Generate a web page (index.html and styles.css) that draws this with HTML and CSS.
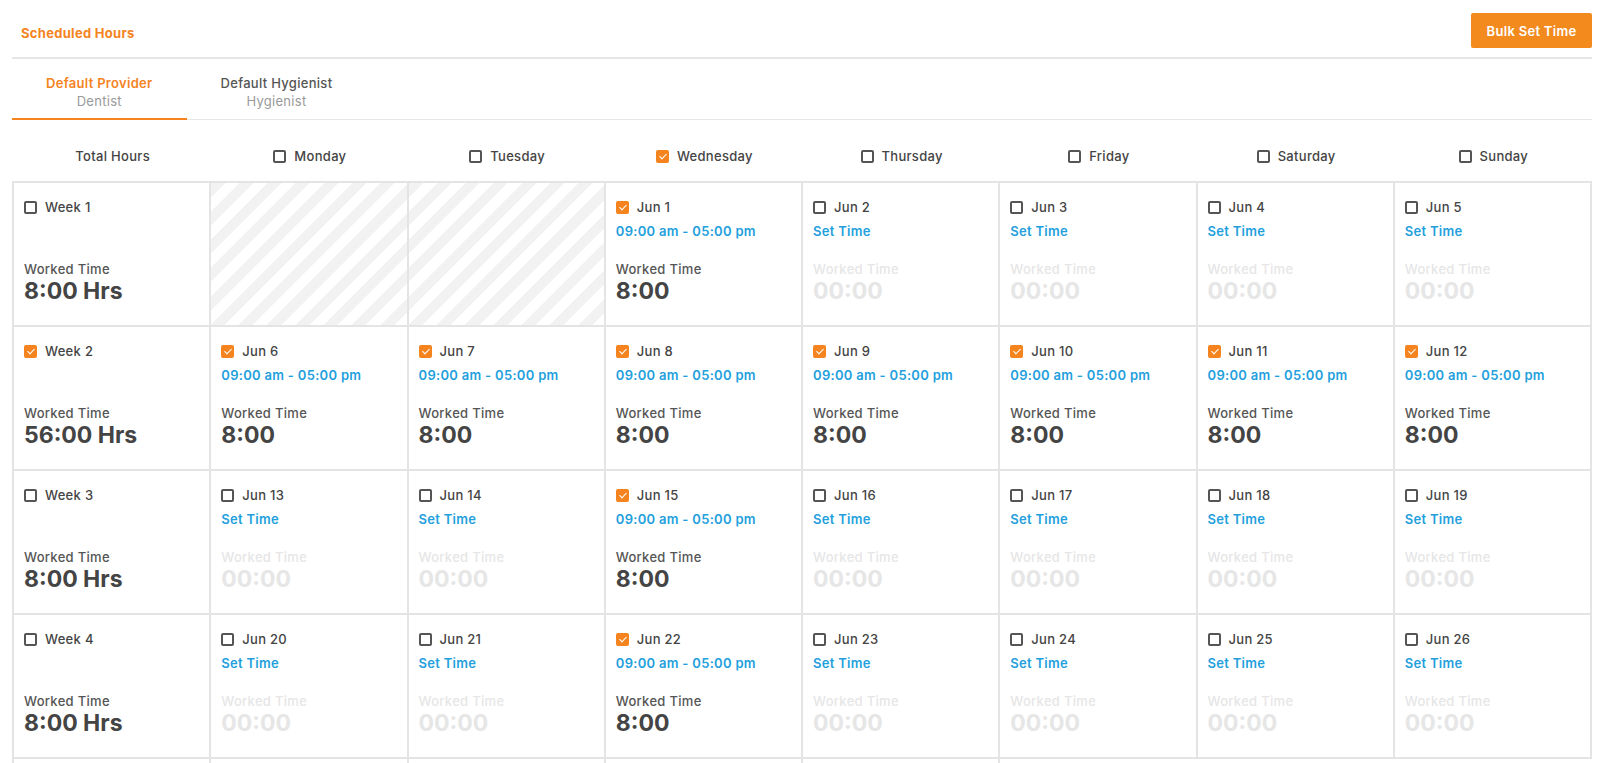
FILE: index.html
```html
<!DOCTYPE html>
<html lang="en">
<head>
<meta charset="utf-8">
<title>Scheduled Hours</title>
<link rel="stylesheet" href="styles.css">
</head>
<body>
<div class="page">
  <header class="topbar">
    <h1 class="title">Scheduled Hours</h1>
    <button class="bulk">Bulk Set Time</button>
  </header>

  <nav class="tabs">
    <div class="tab active"><div class="tab-name">Default Provider</div><div class="tab-sub">Dentist</div></div>
    <div class="tab"><div class="tab-name">Default Hygienist</div><div class="tab-sub">Hygienist</div></div>
  </nav>

  <div class="days">
    <div class="day">Total Hours</div>
    <div class="day"><span class="cb"></span>Monday</div>
    <div class="day"><span class="cb"></span>Tuesday</div>
    <div class="day"><span class="cb on"></span>Wednesday</div>
    <div class="day"><span class="cb"></span>Thursday</div>
    <div class="day"><span class="cb"></span>Friday</div>
    <div class="day"><span class="cb"></span>Saturday</div>
    <div class="day"><span class="cb"></span>Sunday</div>
  </div>

  <div class="grid">
    <!-- Week 1 -->
    <div class="cell"><div class="head"><span class="cb"></span>Week 1</div><div class="time"></div><div class="wl">Worked Time</div><div class="wv">8:00 Hrs</div></div>
    <div class="cell hatch"></div>
    <div class="cell hatch"></div>
    <div class="cell"><div class="head"><span class="cb on"></span>Jun 1</div><div class="time">09:00 am - 05:00 pm</div><div class="wl">Worked Time</div><div class="wv">8:00</div></div>
    <div class="cell off"><div class="head"><span class="cb"></span>Jun 2</div><div class="time">Set Time</div><div class="wl">Worked Time</div><div class="wv">00:00</div></div>
    <div class="cell off"><div class="head"><span class="cb"></span>Jun 3</div><div class="time">Set Time</div><div class="wl">Worked Time</div><div class="wv">00:00</div></div>
    <div class="cell off"><div class="head"><span class="cb"></span>Jun 4</div><div class="time">Set Time</div><div class="wl">Worked Time</div><div class="wv">00:00</div></div>
    <div class="cell off"><div class="head"><span class="cb"></span>Jun 5</div><div class="time">Set Time</div><div class="wl">Worked Time</div><div class="wv">00:00</div></div>

    <!-- Week 2 -->
    <div class="cell"><div class="head"><span class="cb on"></span>Week 2</div><div class="time"></div><div class="wl">Worked Time</div><div class="wv">56:00 Hrs</div></div>
    <div class="cell"><div class="head"><span class="cb on"></span>Jun 6</div><div class="time">09:00 am - 05:00 pm</div><div class="wl">Worked Time</div><div class="wv">8:00</div></div>
    <div class="cell"><div class="head"><span class="cb on"></span>Jun 7</div><div class="time">09:00 am - 05:00 pm</div><div class="wl">Worked Time</div><div class="wv">8:00</div></div>
    <div class="cell"><div class="head"><span class="cb on"></span>Jun 8</div><div class="time">09:00 am - 05:00 pm</div><div class="wl">Worked Time</div><div class="wv">8:00</div></div>
    <div class="cell"><div class="head"><span class="cb on"></span>Jun 9</div><div class="time">09:00 am - 05:00 pm</div><div class="wl">Worked Time</div><div class="wv">8:00</div></div>
    <div class="cell"><div class="head"><span class="cb on"></span>Jun 10</div><div class="time">09:00 am - 05:00 pm</div><div class="wl">Worked Time</div><div class="wv">8:00</div></div>
    <div class="cell"><div class="head"><span class="cb on"></span>Jun 11</div><div class="time">09:00 am - 05:00 pm</div><div class="wl">Worked Time</div><div class="wv">8:00</div></div>
    <div class="cell"><div class="head"><span class="cb on"></span>Jun 12</div><div class="time">09:00 am - 05:00 pm</div><div class="wl">Worked Time</div><div class="wv">8:00</div></div>

    <!-- Week 3 -->
    <div class="cell"><div class="head"><span class="cb"></span>Week 3</div><div class="time"></div><div class="wl">Worked Time</div><div class="wv">8:00 Hrs</div></div>
    <div class="cell off"><div class="head"><span class="cb"></span>Jun 13</div><div class="time">Set Time</div><div class="wl">Worked Time</div><div class="wv">00:00</div></div>
    <div class="cell off"><div class="head"><span class="cb"></span>Jun 14</div><div class="time">Set Time</div><div class="wl">Worked Time</div><div class="wv">00:00</div></div>
    <div class="cell"><div class="head"><span class="cb on"></span>Jun 15</div><div class="time">09:00 am - 05:00 pm</div><div class="wl">Worked Time</div><div class="wv">8:00</div></div>
    <div class="cell off"><div class="head"><span class="cb"></span>Jun 16</div><div class="time">Set Time</div><div class="wl">Worked Time</div><div class="wv">00:00</div></div>
    <div class="cell off"><div class="head"><span class="cb"></span>Jun 17</div><div class="time">Set Time</div><div class="wl">Worked Time</div><div class="wv">00:00</div></div>
    <div class="cell off"><div class="head"><span class="cb"></span>Jun 18</div><div class="time">Set Time</div><div class="wl">Worked Time</div><div class="wv">00:00</div></div>
    <div class="cell off"><div class="head"><span class="cb"></span>Jun 19</div><div class="time">Set Time</div><div class="wl">Worked Time</div><div class="wv">00:00</div></div>

    <!-- Week 4 -->
    <div class="cell"><div class="head"><span class="cb"></span>Week 4</div><div class="time"></div><div class="wl">Worked Time</div><div class="wv">8:00 Hrs</div></div>
    <div class="cell off"><div class="head"><span class="cb"></span>Jun 20</div><div class="time">Set Time</div><div class="wl">Worked Time</div><div class="wv">00:00</div></div>
    <div class="cell off"><div class="head"><span class="cb"></span>Jun 21</div><div class="time">Set Time</div><div class="wl">Worked Time</div><div class="wv">00:00</div></div>
    <div class="cell"><div class="head"><span class="cb on"></span>Jun 22</div><div class="time">09:00 am - 05:00 pm</div><div class="wl">Worked Time</div><div class="wv">8:00</div></div>
    <div class="cell off"><div class="head"><span class="cb"></span>Jun 23</div><div class="time">Set Time</div><div class="wl">Worked Time</div><div class="wv">00:00</div></div>
    <div class="cell off"><div class="head"><span class="cb"></span>Jun 24</div><div class="time">Set Time</div><div class="wl">Worked Time</div><div class="wv">00:00</div></div>
    <div class="cell off"><div class="head"><span class="cb"></span>Jun 25</div><div class="time">Set Time</div><div class="wl">Worked Time</div><div class="wv">00:00</div></div>
    <div class="cell off"><div class="head"><span class="cb"></span>Jun 26</div><div class="time">Set Time</div><div class="wl">Worked Time</div><div class="wv">00:00</div></div>

    <!-- Week 5 (only its top edge is in view) -->
    <div class="cell"></div>
    <div class="cell"></div>
    <div class="cell"></div>
    <div class="cell"></div>
    <div class="cell"></div>
    <div class="empty"></div>
    <div class="empty"></div>
    <div class="empty"></div>
  </div>
</div>
</body>
</html>
```

FILE: styles.css
```css
* { box-sizing: border-box; }

html, body {
  margin: 0;
  padding: 0;
  background: #ffffff;
}

body {
  font-family: Inter, "Open Sans", "Liberation Sans", sans-serif;
  color: #444444;
  font-size: 13px;
  letter-spacing: 0.3px;
}

.page {
  padding: 0 8px 0 12px;
}

/* top bar */
.topbar {
  display: flex;
  justify-content: space-between;
  align-items: flex-start;
  height: 59px;
  border-bottom: 2px solid #e6e6e6;
}

.title {
  margin: 24px 0 0 9px;
  font-size: 13px;
  line-height: 18px;
  font-weight: 700;
  color: #f5841f;
}

.bulk {
  margin-top: 13px;
  width: 121px;
  height: 35px;
  border: none;
  border-radius: 2px;
  background: #f38a1e;
  color: #ffffff;
  font-family: inherit;
  font-size: 13px;
  font-weight: 600;
  letter-spacing: 0.3px;
  padding: 0;
}

/* tabs */
.tabs {
  display: flex;
  border-bottom: 1px solid #e6e6e6;
  height: 61px;
}

.tab {
  padding: 15px 34px 0 34px;
  text-align: center;
  line-height: 18px;
}

.tab.active {
  border-bottom: 2px solid #f5841f;
  margin-bottom: -1px;
}

.tab-name {
  font-weight: 500;
  color: #555555;
}

.tab.active .tab-name {
  font-weight: 600;
  color: #f5841f;
}

.tab-sub {
  color: #9a9a9a;
  font-weight: 400;
}

/* day header */
.days {
  display: grid;
  grid-template-columns: repeat(8, 1fr);
  padding: 26px 0 15px 2px;
  height: 61px;
}

.day {
  display: flex;
  align-items: center;
  justify-content: center;
  height: 20px;
  font-weight: 500;
  color: #444444;
}

.day .cb {
  margin-right: 8px;
}

/* checkbox */
.cb {
  position: relative;
  display: inline-block;
  flex: none;
  width: 13px;
  height: 13px;
  border: 2px solid #555555;
  border-radius: 2px;
  background: #ffffff;
}

.cb.on {
  border-color: #f5841f;
  background: #f5841f;
}

.cb.on::after {
  content: "";
  position: absolute;
  left: 3px;
  top: 0px;
  width: 3px;
  height: 6px;
  border-right: 1.5px solid #ffffff;
  border-bottom: 1.5px solid #ffffff;
  transform: rotate(45deg);
}

/* grid */
.grid {
  display: grid;
  grid-template-columns: repeat(8, 1fr);
  grid-auto-rows: 144px;
  border-top: 2px solid #e4e4e4;
  border-left: 2px solid #e4e4e4;
}

.cell {
  border-right: 2px solid #e4e4e4;
  border-bottom: 2px solid #e4e4e4;
  padding: 14px 10px 0 10px;
  display: flex;
  flex-direction: column;
}

.cell.hatch {
  background: repeating-linear-gradient(135deg, #f2f2f2 0 10px, #ffffff 10px 20px);
}

.head {
  display: flex;
  align-items: center;
  height: 20px;
  font-weight: 500;
  color: #444444;
}

.head .cb {
  margin-right: 8px;
}

.time {
  margin-top: 4px;
  height: 20px;
  line-height: 20px;
  font-weight: 600;
  color: #239fdd;
}

.wl {
  margin-top: 20px;
  line-height: 16px;
  font-weight: 500;
  color: #555555;
}

.wv {
  line-height: 28px;
  font-size: 23px;
  font-weight: 700;
  color: #444444;
  letter-spacing: 0;
}

.cell.off .wl,
.cell.off .wv {
  color: #e6e6e6;
}
```
